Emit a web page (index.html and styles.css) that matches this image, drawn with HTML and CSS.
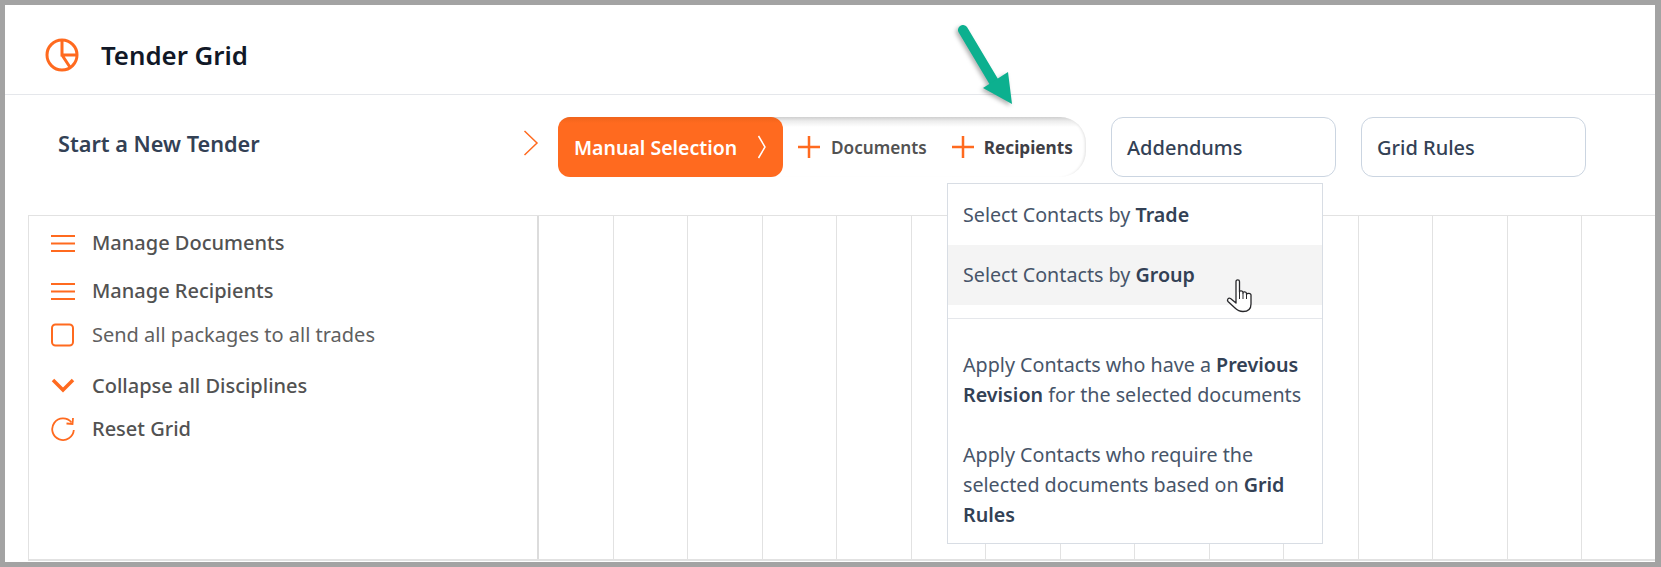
FILE: index.html
```html
<!DOCTYPE html>
<html lang="en">
<head>
<meta charset="utf-8">
<title>Tender Grid</title>
<link rel="stylesheet" href="styles.css">
</head>
<body>
<div class="frame">
  <header class="header">
    <svg class="pie" width="34" height="34" viewBox="0 0 34 34" fill="none" stroke="#ff6a1f" stroke-width="3"><circle cx="17" cy="17" r="15"/><path d="M17 2V17H32M17 17L25.500 30"/></svg>
    <h1 class="title">Tender Grid</h1>
  </header>
  <section class="toolbar">
    <div class="start">Start a New Tender</div>
    <svg class="step-chev" width="16" height="26" viewBox="0 0 16 26" fill="none" stroke="#ff6a1f" stroke-width="1.500"><path d="M1.500 1L14 13L1.500 25"/></svg>
    <div class="pill">
      <div class="pill-active">
        <span>Manual Selection</span>
        <svg width="10" height="24" viewBox="0 0 10 24" fill="none" stroke="#fff" stroke-width="1.500"><path d="M1.500 1L8 12L1.500 23"/></svg>
      </div>
      <div class="pill-item docs">
        <svg width="24" height="24" viewBox="0 0 24 24" stroke="#ff6a1f" stroke-width="2.500"><path d="M1 12H23M12 1V23"/></svg>
        <span>Documents</span>
      </div>
      <div class="pill-item recips">
        <svg width="24" height="24" viewBox="0 0 24 24" stroke="#ff6a1f" stroke-width="2.500"><path d="M1 12H23M12 1V23"/></svg>
        <span>Recipients</span>
      </div>
    </div>
    <button class="box-btn">Addendums</button>
    <button class="box-btn">Grid Rules</button>
  </section>
  <section class="grid">
    <aside class="panel">
      <div class="row r1">
        <svg class="ic" width="24" height="24" viewBox="0 0 24 24" stroke="#ff6a1f" stroke-width="2"><path d="M0 5H24M0 12.500H24M0 20H24"/></svg>
        <span class="med">Manage Documents</span>
      </div>
      <div class="row r2">
        <svg class="ic" width="24" height="24" viewBox="0 0 24 24" stroke="#ff6a1f" stroke-width="2"><path d="M0 5H24M0 12.500H24M0 20H24"/></svg>
        <span class="med">Manage Recipients</span>
      </div>
      <div class="row r3">
        <svg class="ic" width="24" height="24" viewBox="0 0 24 24" fill="none" stroke="#ff6a1f" stroke-width="2"><rect x="1" y="1.500" width="21" height="21" rx="3.500"/></svg>
        <span class="thin">Send all packages to all trades</span>
      </div>
      <div class="row r4">
        <svg class="ic" width="24" height="24" viewBox="0 0 24 24" fill="none" stroke="#ff6a1f" stroke-width="3.500"><path d="M2 6L12 16L22 6"/></svg>
        <span class="med">Collapse all Disciplines</span>
      </div>
      <div class="row r5">
        <svg class="ic" width="24" height="24" viewBox="0 0 24 24" fill="none" stroke="#ff6a1f" stroke-width="1.800"><path d="M20.500 5.500A10.800 10.800 0 1 0 22.800 13"/><path d="M15.500 6.500L21.500 7L22 1" stroke-width="1.800"/></svg>
        <span class="med">Reset Grid</span>
      </div>
    </aside>
    <div class="cols">
      <div></div><div></div><div></div><div></div><div></div><div></div><div></div><div></div><div></div><div></div><div></div><div></div><div></div><div></div><div></div>
    </div>
  </section>

  <div class="menu">
    <div class="menu-item">Select Contacts by <b>Trade</b></div>
    <div class="menu-item hover">Select Contacts by <b>Group</b></div>
    <div class="menu-lower">
      <p>Apply Contacts who have a <b>Previous Revision</b> for the selected documents</p>
      <p>Apply Contacts who require the selected documents based on <b>Grid Rules</b></p>
    </div>
  </div>

  <svg class="hand" width="30" height="36" viewBox="0 0 30 36" fill="#fff" stroke="#27272a" stroke-width="1.300" stroke-linejoin="round"><path d="M10 3.500C10 1.200 13.500 1.200 13.500 3.500V14C13.500 12.300 17 12.300 17 14.500V15C17 13.300 20.500 13.300 20.500 15.500V16.500C20.500 14.800 25 14.800 25 17V26C25 30.500 23 33.500 17 33.500C13.500 33.500 11 32 9 30L2 23.500C0.500 21.500 2.500 19.500 4.500 20.500L10 25Z"/><path d="M13.500 14V21M17 15V21M20.500 16V21" fill="none" stroke-width="1"/></svg>

  <svg class="arrow" width="90" height="110" viewBox="0 0 90 110"><path d="M13 15L44 67" stroke="#0cb08f" stroke-width="10" stroke-linecap="round" fill="none"/><path d="M58 57L62 89L33 73Z" fill="#0cb08f"/></svg>
</div>
</body>
</html>
```
FILE: styles.css
```css
* { box-sizing: border-box; }
html, body { margin: 0; height: 100%; }
body { background: #a3a3a3; font-family: "Noto Sans", "Open Sans", sans-serif; overflow: hidden; }
.frame { position: relative; width: 1650px; height: 557px; margin: 5px 0 0 5px; background: #fff; overflow: hidden; }

.header { height: 90px; display: flex; align-items: center; padding: 10px 0 0 40px; border-bottom: 1px solid #e5e7eb; }
.pie { flex: none; }
.title { margin: 0 0 0 22px; font-size: 25.800px; line-height: 32px; font-weight: 600; color: #111827; }

.toolbar { height: 120px; display: flex; align-items: flex-start; padding: 22px 0 0 53px; }
.start { width: 465px; padding-top: 13px; font-size: 21.700px; line-height: 28px; font-weight: 600; color: #334155; }
.step-chev { flex: none; margin: 13px 0 0 0; }
.pill { flex: none; width: 528px; height: 60px; margin-left: 19px; display: flex; align-items: center; border-radius: 12px 26px 26px 12px; background: linear-gradient(#cfcfcf 0, #ececec 4px, #fff 10px); box-shadow: inset -3px 0 3px -2px #e0e0e0; }
.pill-active { flex: none; width: 225px; height: 60px; display: flex; align-items: center; justify-content: space-between; padding: 0 16px 0 16px; border-radius: 12px; background: linear-gradient(#f0641c 0, #ff6a1f 6px); color: #fff; font-size: 19.500px; font-weight: 600; }
.pill-item { display: flex; align-items: center; font-size: 17.200px; font-weight: 600; }
.pill-item span { margin-left: 10px; }
.docs { margin-left: 14px; color: #525252; }
.recips { margin-left: 24px; color: #3f3f46; font-weight: 700; }
.recips span { margin-left: 9px; }
.box-btn { flex: none; width: 225px; height: 60px; margin-left: 25px; padding: 0 0 0 15px; text-align: left; background: #fff; border: 1px solid #cbd5e1; border-radius: 12px; font: 500 20px "Noto Sans", sans-serif; color: #334155; }

.grid { height: 346px; margin-left: 23px; display: flex; border-top: 1px solid #e2e2e2; border-bottom: 2px solid #e2e2e2; }
.panel { flex: none; width: 511px; padding-top: 12px; border-left: 1px solid #e2e2e2; border-right: 2px solid #dcdcdc; font-size: 20px; color: #525252; }
.row { height: 30px; display: flex; align-items: center; padding-left: 22px; white-space: nowrap; }
.row span { margin-left: 17px; line-height: 30px; }
.row .med { font-weight: 500; }
.row .thin { font-weight: 400; color: #5f5f5f; }
.ic { flex: none; }
.r2 { margin-top: 18px; }
.r3 { margin-top: 14px; }
.r4 { margin-top: 21px; }
.r5 { margin-top: 13px; }
.cols { flex: 1; display: grid; grid-template-columns: repeat(15, 74.500px); }
.cols div { border-right: 1px solid #e2e2e2; }

.menu { position: absolute; left: 942px; top: 178px; width: 376px; height: 361px; background: #fff; border: 1px solid #d8dde4; font-size: 19.700px; line-height: 30px; color: #475569; }
.menu b { font-weight: 600; color: #334155; }
.menu-item { height: 60px; padding: 15px 15px 0; }
.menu-item.hover { background: #f4f4f4; }
.menu-item:first-child { height: 61px; padding-top: 16px; }
.menu-lower { margin-top: 13px; padding: 31px 15px 0; border-top: 1px solid #e5e7eb; }
.menu-lower p { margin: 0 0 30px; }

.hand { position: absolute; left: 1221px; top: 273px; }
.arrow { position: absolute; left: 945px; top: 10px; overflow: visible; filter: drop-shadow(-2px 2px 2px rgba(0,0,0,.3)); }
```
